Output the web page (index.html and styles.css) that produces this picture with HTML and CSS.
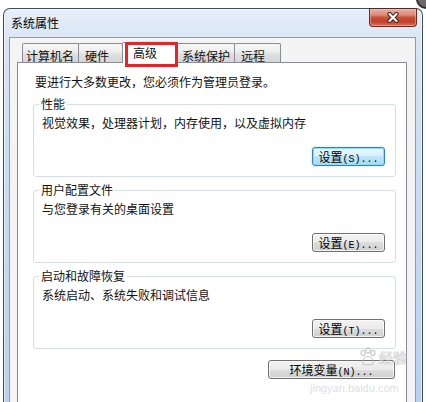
FILE: index.html
```html
<!DOCTYPE html>
<html lang="zh-CN">
<head>
<meta charset="utf-8">
<title>系统属性</title>
<link rel="stylesheet" href="styles.css">
</head>
<body>
<div class="window">
  <div class="titlebar">
    <span class="title">系统属性</span>
    <button class="close" aria-label="关闭">
      <svg width="14" height="11" viewBox="0 0 14 11"><path d="M3.5 2 L10.5 9 M10.5 2 L3.5 9" stroke="#4a1c16" stroke-width="4.2" stroke-linecap="round" fill="none"/><path d="M3.5 2 L10.5 9 M10.5 2 L3.5 9" stroke="#ffffff" stroke-width="2.2" stroke-linecap="round" fill="none"/></svg>
    </button>
  </div>
  <div class="client">
    <div class="tabs">
      <div class="tab w1">计算机名</div>
      <div class="tab w2">硬件</div>
      <div class="tab selected w3">高级<span class="mark"></span></div>
      <div class="tab w4">系统保护</div>
      <div class="tab w5">远程</div>
    </div>
    <div class="panel">
      <p class="intro">要进行大多数更改，您必须作为管理员登录。</p>
      <fieldset class="group first">
        <legend>性能</legend>
        <p class="desc">视觉效果，处理器计划，内存使用，以及虚拟内存</p>
        <div class="actions"><button class="btn default">设置<span class="mn">(S)...</span></button></div>
      </fieldset>
      <fieldset class="group">
        <legend>用户配置文件</legend>
        <p class="desc">与您登录有关的桌面设置</p>
        <div class="actions"><button class="btn">设置<span class="mn">(E)...</span></button></div>
      </fieldset>
      <fieldset class="group">
        <legend>启动和故障恢复</legend>
        <p class="desc">系统启动、系统失败和调试信息</p>
        <div class="actions"><button class="btn">设置<span class="mn">(T)...</span></button></div>
      </fieldset>
      <div class="actions env"><button class="btn wide">环境变量<span class="mn">(N)...</span></button></div>
    </div>
  </div>
</div>
<div class="watermark">
  <div class="wm-top">
    <svg class="paw" width="18" height="20" viewBox="0 0 18 20"><g fill="none" stroke="#b9b9b9" stroke-width="1.2"><ellipse cx="4" cy="6" rx="2" ry="2.6"/><ellipse cx="9" cy="3.5" rx="2" ry="2.6"/><ellipse cx="14" cy="6" rx="2" ry="2.6"/><path d="M4 16 C4 11 7 9.5 9 9.5 C11 9.5 14 11 14 16 C14 18.5 11 18 9 17.5 C7 18 4 18.5 4 16 Z"/></g></svg>
    <span class="wm-cn">经验</span>
  </div>
  <div class="wm-url">jingyan.baidu.com</div>
</div>
<div class="corner"></div>
</body>
</html>
```
FILE: styles.css
```css
html, body {
  margin: 0;
  padding: 0;
}
body {
  position: relative;
  width: 426px;
  height: 402px;
  overflow: hidden;
  background: #ffffff;
  font-family: "Noto Sans CJK SC", "Noto Sans", sans-serif;
  font-size: 12px;
  color: #111;
}
.window {
  box-sizing: border-box;
  width: 420px;
  height: 410px;
  margin: 8px 0 0 3px;
  padding: 0 6px 0 5px;
  border: 1px solid #3c4a5b;
  border-bottom: none;
  border-radius: 7px 7px 0 0;
  background: linear-gradient(to bottom, #e6eef8 0, #d6e4f4 40px, #c6dbf1 200px, #b7d1ee 400px);
  box-shadow: inset 0 0 0 1px rgba(255,255,255,0.55);
}
.titlebar {
  display: flex;
  align-items: flex-start;
  justify-content: space-between;
  height: 28px;
}
.title {
  padding-left: 2px;
  line-height: 28px;
  color: #000;
}
.close {
  box-sizing: border-box;
  width: 48px;
  height: 19px;
  margin: -1px -1px 0 0;
  padding: 0;
  display: flex;
  align-items: center;
  justify-content: center;
  border: 1px solid #6b2b24;
  border-top-color: #4a2a28;
  border-radius: 0 0 4px 4px;
  background: linear-gradient(to bottom, #eab0a3 0, #dc8a78 35%, #c8503a 50%, #c13f2a 72%, #d7705a 100%);
  box-shadow: inset 0 0 0 1px rgba(255,200,190,0.45);
}
.close svg {
  display: block;
}
.client {
  box-sizing: border-box;
  height: 373px;
  padding: 5px 8px 0 7px;
  border: 1px solid #8c9bb0;
  border-bottom: none;
  background: #f4f4f4;
}
.tabs {
  display: flex;
  align-items: flex-end;
  height: 19px;
  padding-left: 5px;
  position: relative;
  z-index: 1;
}
.tab {
  box-sizing: border-box;
  height: 19px;
  padding: 5px 0 0 4px;
  line-height: 14px;
  border: 1px solid #898c95;
  border-bottom: none;
  border-radius: 2px 2px 0 0;
  background: linear-gradient(to bottom, #f6f6f6 0, #eeeeee 45%, #e0e0e0 55%, #d6d6d6 100%);
  white-space: nowrap;
}
.tab + .tab {
  margin-left: -1px;
}
.w1 { width: 57px; padding-left: 3px; }
.w2 { width: 45px; padding-left: 6px; }
.w3 { width: 56px; }
.w4 { width: 58px; padding-left: 4px; }
.w5 { width: 47px; padding-left: 6px; }
.tab.selected {
  position: relative;
  z-index: 2;
  height: 21px;
  margin-bottom: -1px;
  padding: 3px 0 0 10px;
  background: #ffffff;
}
.mark {
  position: absolute;
  left: 2px;
  top: -1px;
  width: 53px;
  height: 25px;
  box-sizing: border-box;
  border: 3px solid #e3262c;
}
.panel {
  box-sizing: border-box;
  height: 360px;
  padding: 11px 10px 0 15px;
  border: 1px solid #898c95;
  background: #ffffff;
}
.intro {
  margin: 0;
  padding-left: 2px;
  line-height: 16px;
}
.group {
  margin: 5px 0 0;
  padding: 0 10px 10px 8px;
  min-width: 0;
  border: 1px solid #d5dfe5;
  border-radius: 3px;
}
.group.first {
  margin-top: 6px;
}
.group legend {
  margin-left: -3px;
  padding: 0 2px;
  line-height: 16px;
}
.desc {
  margin: 3px 0 0;
  line-height: 16px;
}
.actions {
  display: flex;
  justify-content: flex-end;
  margin-top: 16px;
}
.btn {
  box-sizing: border-box;
  width: 73px;
  height: 19px;
  margin: 0;
  padding: 0;
  border: 1px solid #707070;
  border-radius: 3px;
  background: linear-gradient(to bottom, #f2f2f2 0, #ebebeb 50%, #dddddd 50%, #cfcfcf 100%);
  box-shadow: inset 0 0 0 1px rgba(255,255,255,0.7);
  font-family: "Noto Sans CJK SC", sans-serif;
  font-size: 12px;
  line-height: 17px;
  color: #000;
  white-space: nowrap;
}
.btn.default {
  border-color: #3c7fb1;
  background: linear-gradient(to bottom, #eaf6fd 0, #d9f0fc 50%, #bee6fd 50%, #a7d9f5 100%);
  box-shadow: inset 0 0 0 1px #8fdcf8, 0 0 2px rgba(90,180,230,0.6);
}
.btn.wide {
  width: 127px;
}
.mn {
  font-family: "Liberation Mono", monospace;
  font-size: 10px;
}
.env {
  margin-top: 11px;
  margin-right: 1px;
}
.watermark {
  position: absolute;
  left: 300px;
  top: 346px;
  width: 110px;
  pointer-events: none;
}
.wm-top {
  display: flex;
  align-items: center;
  justify-content: flex-end;
  gap: 2px;
  height: 22px;
  padding-right: 3px;
  opacity: 0.75;
}
.wm-cn {
  font-size: 14px;
  line-height: 18px;
  color: rgba(255,255,255,0.7);
  text-shadow: 0 0 1px #9a9a9a, 0 0 1px #9a9a9a;
}
.wm-url {
  margin-top: 14px;
  padding-left: 10px;
  font-family: "Liberation Sans", sans-serif;
  font-size: 11px;
  line-height: 12px;
  color: rgba(200,200,200,0.6);
}
.corner {
  position: absolute;
  left: 416px;
  top: -11px;
  width: 16px;
  height: 16px;
  border-radius: 50%;
  border: 2px solid #2e2e2e;
  background: #6a6a6a;
}
```
